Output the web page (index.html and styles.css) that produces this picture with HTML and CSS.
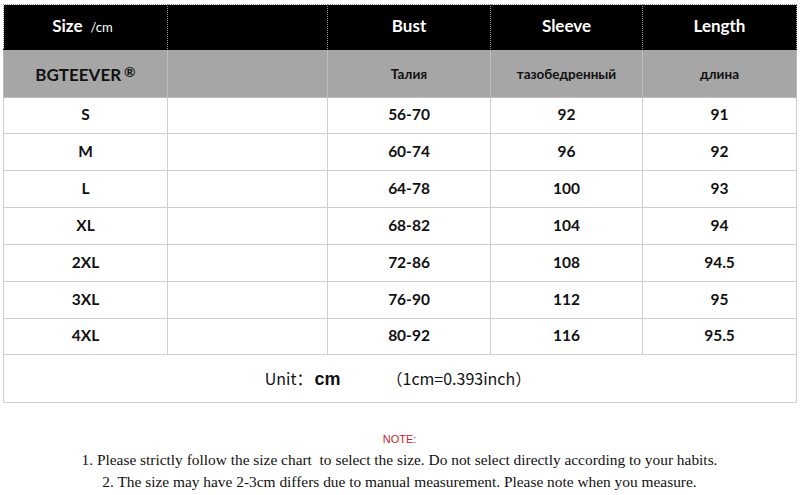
FILE: index.html
```html
<!DOCTYPE html>
<html>
<head>
<meta charset="utf-8">
<link rel="stylesheet" href="styles.css">
</head>
<body>
<div class="page">
  <table class="chart">
    <colgroup>
      <col class="c1"><col class="c2"><col class="c3"><col class="c4"><col class="c5">
    </colgroup>
    <tr class="head">
      <td class="size-h">Size<span class="unit-sm">/cm</span></td><td></td><td>Bust</td><td>Sleeve</td><td>Length</td>
    </tr>
    <tr class="sub">
      <td class="brand">BGTEEVER<span class="reg">®</span></td><td></td><td>Талия</td><td>тазобедренный</td><td>длина</td>
    </tr>
    <tr class="row r36"><td>S</td><td></td><td>56-70</td><td>92</td><td>91</td></tr>
    <tr class="row"><td>M</td><td></td><td>60-74</td><td>96</td><td>92</td></tr>
    <tr class="row"><td>L</td><td></td><td>64-78</td><td>100</td><td>93</td></tr>
    <tr class="row"><td>XL</td><td></td><td>68-82</td><td>104</td><td>94</td></tr>
    <tr class="row"><td>2XL</td><td></td><td>72-86</td><td>108</td><td>94.5</td></tr>
    <tr class="row"><td>3XL</td><td></td><td>76-90</td><td>112</td><td>95</td></tr>
    <tr class="row r36"><td>4XL</td><td></td><td>80-92</td><td>116</td><td>95.5</td></tr>
    <tr class="unitrow">
      <td colspan="5"><span class="u-label">Unit：</span><span class="u-cm">cm</span><span class="u-conv">（1cm=0.393inch）</span></td>
    </tr>
  </table>
  <div class="notes">
    <div class="note-title">NOTE:</div>
    <p>1. Please strictly follow the size chart&nbsp; to select the size. Do not select directly according to your habits.</p>
    <p>2. The size may have 2-3cm differs due to manual measurement. Please note when you measure.</p>
  </div>
</div>
</body>
</html>
```

FILE: styles.css
```css
html, body {
  margin: 0;
  padding: 0;
  background: #ffffff;
}
.page {
  padding: 4px 4px 0 3px;
  width: 793px;
}
.chart {
  border-collapse: collapse;
  table-layout: fixed;
  width: 793px;
  font-family: Lato, "Open Sans", sans-serif;
  font-weight: 700;
  color: #111;
}
.c1 { width: 164px; }
.c2 { width: 160px; }
.c3 { width: 163px; }
.c4 { width: 152px; }
.c5 { width: 154px; }
.chart td {
  border: 1px solid #cfcfcf;
  text-align: center;
  vertical-align: middle;
  padding: 0;
}
.head td {
  background: #000;
  color: #fff;
  height: 41px;
  font-size: 17px;
  padding-bottom: 3px;
  border: 1px dotted #9a9a9a;
  border-bottom: 1px solid #000;
}
.head td.size-h {
  padding-right: 6px;
}
.unit-sm {
  font-size: 13px;
  font-weight: 400;
  margin-left: 8px;
}
.sub td {
  background: #a6a6a6;
  height: 47px;
  font-size: 13.5px;
  color: #111;
  border-color: #bdbdbd;
}
.sub td.brand {
  font-size: 17px;
}
.reg {
  font-size: 14px;
  vertical-align: 4px;
  margin-left: 3px;
}
.row td {
  height: 33px;
  font-size: 15.5px;
  padding-bottom: 3px;
}
.row.r36 td {
  height: 32px;
}
.unitrow td {
  height: 45px;
  font-family: "Noto Sans CJK SC", "Open Sans", sans-serif;
  font-weight: 400;
  font-size: 16px;
  color: #111;
  padding-right: 4px;
  padding-bottom: 2px;
}
.u-cm {
  font-family: "Liberation Sans", Arial, sans-serif;
  font-weight: 700;
  font-size: 18px;
  margin-left: 2px;
}
.u-conv {
  margin-left: 46px;
}
.notes {
  text-align: center;
  margin-top: 29px;
  font-family: "Liberation Serif", "Times New Roman", serif;
  color: #111;
}
.note-title {
  font-family: "Liberation Sans", Arial, sans-serif;
  font-size: 11px;
  color: #c4262e;
  line-height: 14px;
  margin-bottom: 3px;
}
.notes p {
  margin: 0;
  font-size: 15.4px;
  line-height: 22px;
}
```
